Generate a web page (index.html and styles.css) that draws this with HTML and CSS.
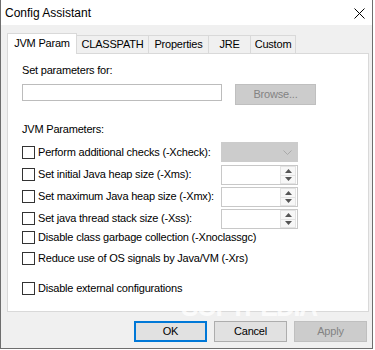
FILE: index.html
```html
<!DOCTYPE html>
<html lang="en">
<head>
    <meta charset="UTF-8">
    <title>Config Assistant</title>
    <link rel="stylesheet" href="styles.css">
</head>
<body>
    <div class="window">
        <!-- Barre de titre -->
        <div class="titlebar">
            <span class="title">Config Assistant</span>
            <svg class="close" width="11" height="11" viewBox="0 0 11 11">
                <path d="M0.5 0.5 L10.5 10.5 M10.5 0.5 L0.5 10.5" stroke="#000" stroke-width="1" fill="none"/>
            </svg>
        </div>

        <div class="body">
            <!-- Onglets -->
            <div class="tabs">
                <div class="tab active w-jvm">JVM Param</div>
                <div class="tab w-cp">CLASSPATH</div>
                <div class="tab w-props">Properties</div>
                <div class="tab w-jre">JRE</div>
                <div class="tab w-custom">Custom</div>
            </div>

            <div class="panel">
                <div class="label first">Set parameters for:</div>
                <div class="path-row">
                    <div class="textbox"></div>
                    <div class="btn disabled browse">Browse...</div>
                </div>

                <div class="label section">JVM Parameters:</div>

                <div class="params">
                    <div class="check"><span class="box"></span>Perform additional checks (-Xcheck):</div>
                    <div class="combo">
                        <svg width="9" height="5" viewBox="0 0 9 5"><path d="M0.5 0.5 L4.5 4.5 L8.5 0.5" stroke="#a9a9a9" fill="none"/></svg>
                    </div>

                    <div class="check"><span class="box"></span>Set initial Java heap size (-Xms):</div>
                    <div class="spinner">
                        <div class="arrows">
                            <div class="arrow"><svg width="7" height="4" viewBox="0 0 7 4"><path d="M3.5 0 L7 4 L0 4 Z" fill="#555"/></svg></div>
                            <div class="arrow"><svg width="7" height="4" viewBox="0 0 7 4"><path d="M0 0 L7 0 L3.5 4 Z" fill="#555"/></svg></div>
                        </div>
                    </div>

                    <div class="check"><span class="box"></span>Set maximum Java heap size (-Xmx):</div>
                    <div class="spinner">
                        <div class="arrows">
                            <div class="arrow"><svg width="7" height="4" viewBox="0 0 7 4"><path d="M3.5 0 L7 4 L0 4 Z" fill="#555"/></svg></div>
                            <div class="arrow"><svg width="7" height="4" viewBox="0 0 7 4"><path d="M0 0 L7 0 L3.5 4 Z" fill="#555"/></svg></div>
                        </div>
                    </div>

                    <div class="check"><span class="box"></span>Set java thread stack size (-Xss):</div>
                    <div class="spinner">
                        <div class="arrows">
                            <div class="arrow"><svg width="7" height="4" viewBox="0 0 7 4"><path d="M3.5 0 L7 4 L0 4 Z" fill="#555"/></svg></div>
                            <div class="arrow"><svg width="7" height="4" viewBox="0 0 7 4"><path d="M0 0 L7 0 L3.5 4 Z" fill="#555"/></svg></div>
                        </div>
                    </div>
                </div>

                <div class="check single gc"><span class="box"></span>Disable class garbage collection (-Xnoclassgc)</div>
                <div class="check single xrs"><span class="box"></span>Reduce use of OS signals by Java/VM (-Xrs)</div>
                <div class="check single ext"><span class="box"></span>Disable external configurations</div>
            </div>

            <!-- Boutons -->
            <div class="buttons">
                <div class="btn default">OK</div>
                <div class="btn">Cancel</div>
                <div class="btn disabled">Apply</div>
            </div>
        </div>

        <div class="watermark">SOFTPEDIA<sup>®</sup></div>
    </div>
</body>
</html>
```

FILE: styles.css
```css
/* Styles généraux */
body {
    margin: 0;
    font-family: "Liberation Sans", Arial, sans-serif;
    font-size: 11px;
    color: #000;
    background: #fff;
}

.window {
    position: relative;
    width: 371px;
    height: 348px;
    border: 1px solid #6e6e6e;
    border-top: none;
    background: #f0f0f0;
    overflow: hidden;
}

/* Barre de titre */
.titlebar {
    height: 25px;
    background: #fff;
    display: flex;
    align-items: center;
    justify-content: space-between;
    padding: 0 7px 0 4px;
}

.title {
    font-size: 12px;
}

.close {
    margin-top: 1px;
}

.body {
    padding: 8px 0 0 6px;
    letter-spacing: -0.2px;
}

/* Onglets */
.tabs {
    display: flex;
    align-items: flex-end;
    height: 20px;
}

.tab {
    height: 17px;
    line-height: 17px;
    text-align: center;
    background: #f0f0f0;
    border: 1px solid #d9d9d9;
    border-bottom: none;
    border-left: none;
    box-sizing: content-box;
}

.tab.active {
    height: 20px;
    line-height: 19px;
    background: #fff;
    border-left: 1px solid #d9d9d9;
    margin-bottom: -1px;
    position: relative;
    z-index: 1;
}

.w-jvm { width: 68px; }
.w-cp { width: 71px; }
.w-props { width: 59px; }
.w-jre { width: 41px; }
.w-custom { width: 44px; }

/* Panneau */
.panel {
    width: 346px;
    height: 246px;
    background: #fff;
    border: 1px solid #d9d9d9;
    padding: 0 0 11px 14px;
}

.label {
    line-height: 14px;
}

.label.first {
    padding-top: 9px;
}

.label.section {
    margin-top: 17px;
}

.path-row {
    display: flex;
    align-items: flex-start;
    height: 21px;
    margin-top: 7px;
}

.textbox {
    width: 198px;
    height: 15px;
    border: 1px solid #bcbcbc;
    background: #fff;
}

.btn {
    width: 71px;
    height: 19px;
    line-height: 19px;
    text-align: center;
    background: #e1e1e1;
    border: 1px solid #adadad;
}

.btn.disabled {
    background: #cccccc;
    border-color: #bfbfbf;
    color: #838383;
}

.btn.default {
    width: 69px;
    height: 17px;
    line-height: 17px;
    border: 2px solid #0078d7;
}

.browse {
    width: 79px;
    margin-left: 13px;
}

/* Paramètres */
.params {
    display: grid;
    grid-template-columns: 199px 77px;
    grid-auto-rows: 20px;
    row-gap: 2px;
    margin-top: 6px;
}

.check {
    display: flex;
    align-items: center;
}

.box {
    width: 11px;
    height: 11px;
    border: 1px solid #333;
    background: #fff;
    margin-right: 3px;
    margin-top: 1px;
    flex: none;
}

.check.single {
    height: 18px;
}

.gc { margin-top: 0; }
.xrs { margin-top: 3px; }
.ext { margin-top: 12px; }

.combo {
    height: 20px;
    background: #cccccc;
    display: flex;
    align-items: center;
    justify-content: flex-end;
    padding-right: 6px;
}

.spinner {
    height: 18px;
    border: 1px solid #c8c8c8;
    background: #fff;
    display: flex;
    justify-content: flex-end;
    padding: 0 1px;
    margin-top: 1px;
    margin-bottom: -1px;
}

.arrows {
    width: 16px;
    display: flex;
    flex-direction: column;
}

.arrow {
    flex: 1;
    display: flex;
    align-items: center;
    justify-content: center;
    background: #f7f7f7;
    border: 1px solid #e3e3e3;
}

.arrow + .arrow {
    border-top: none;
}

/* Boutons du bas */
.buttons {
    display: flex;
    justify-content: flex-end;
    gap: 7px;
    width: 360px;
    margin-top: 9px;
}

/* Filigrane */
.watermark {
    position: absolute;
    left: 180px;
    top: 294px;
    height: 24px;
    line-height: 24px;
    font-size: 30px;
    font-weight: bold;
    letter-spacing: -2px;
    color: rgba(255, 255, 255, 0.75);
    transform: scaleX(0.88);
    transform-origin: left top;
    pointer-events: none;
}

.watermark sup {
    font-size: 12px;
    line-height: 12px;
    vertical-align: top;
}
```
